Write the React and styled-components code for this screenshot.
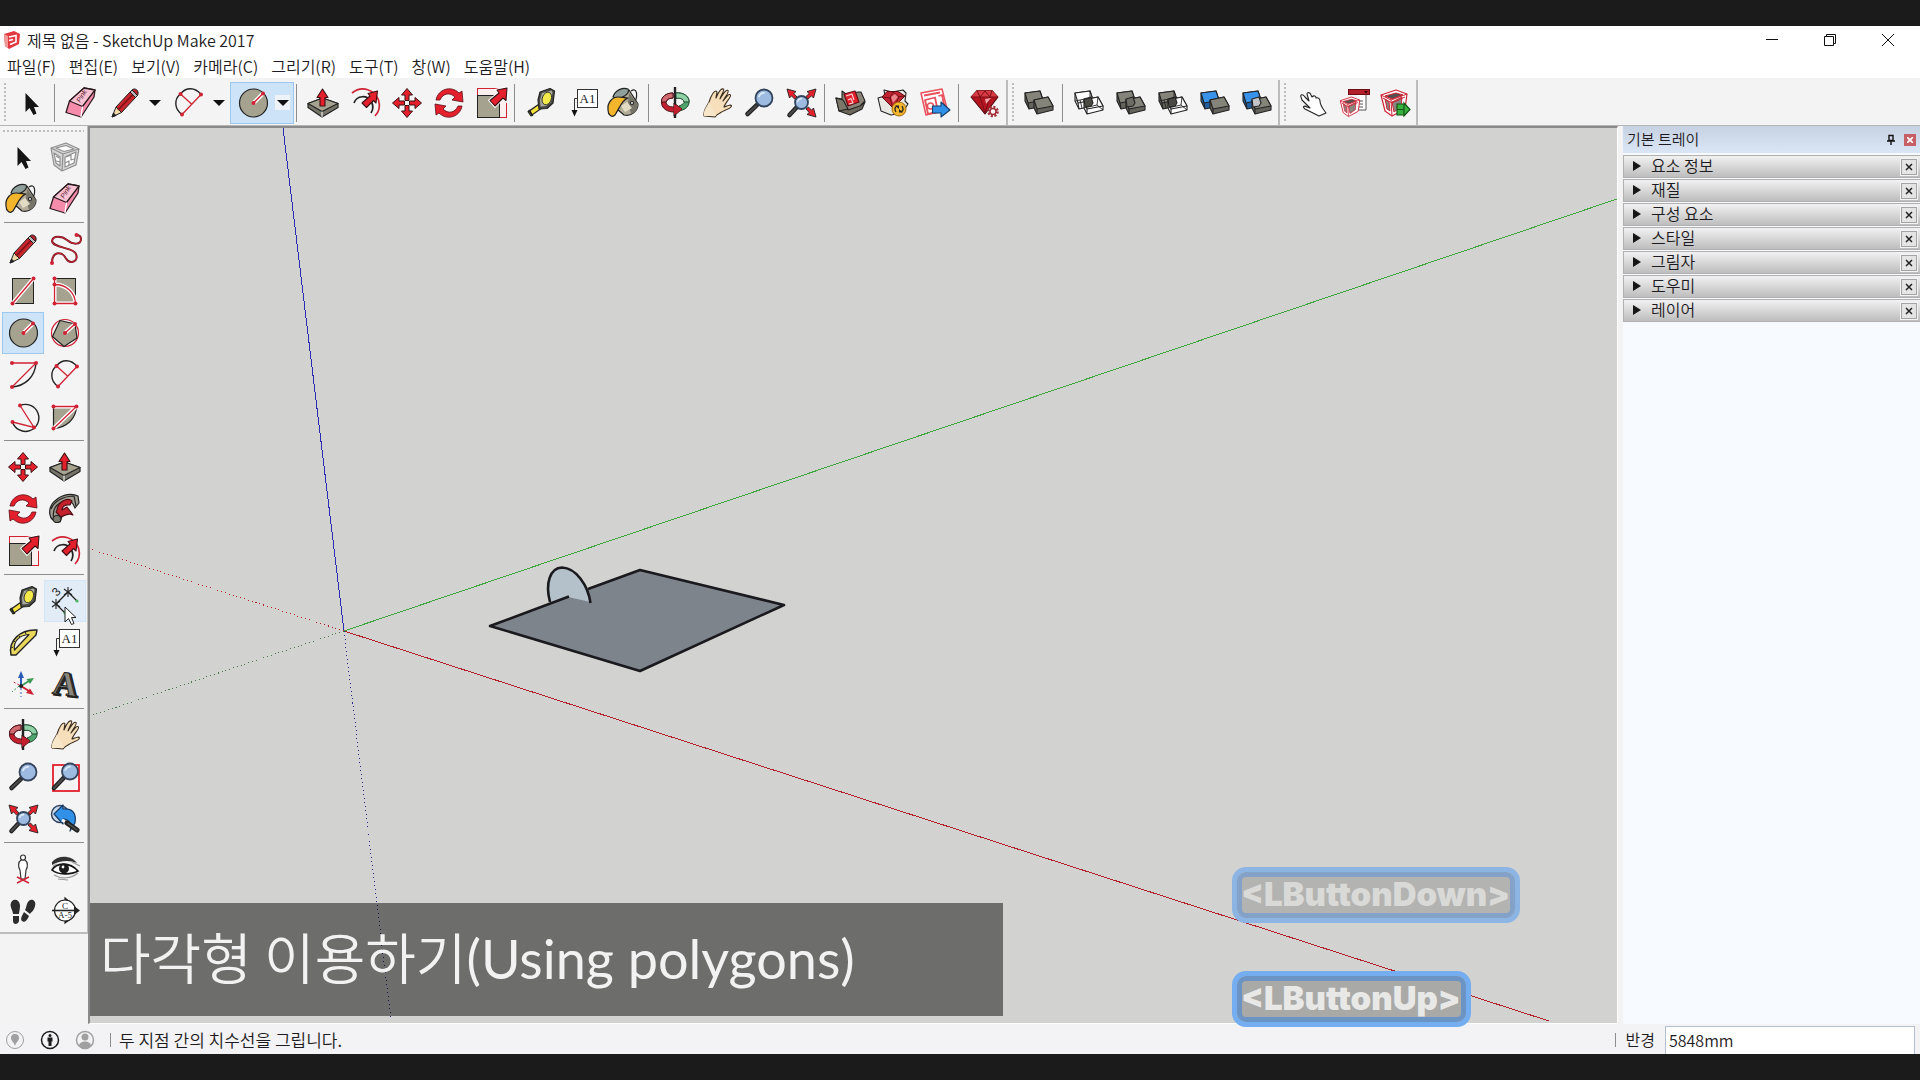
import { useState } from "react";
import styled, { createGlobalStyle, css } from "styled-components";

const RED = "#e3202c";
const LINE = "#cf2334";
const DARK = "#222222";
const STONE = "#a5a390";

const Dot = ({ x, y }) => <circle cx={x} cy={y} r="2" fill={LINE} />;

// red guide line with a white halo so it reads over the grey faces
const Guide = ({ d }) => (
    <g fill="none">
        <path d={d} stroke="#fff" strokeWidth="4" />
        <path d={d} stroke={LINE} strokeWidth="1.3" />
    </g>
);

const Lens = ({ x, y, r, hx, hy }) => (
    <g>
        <path d={`M${x - r * 0.7} ${y + r * 0.7}L${hx} ${hy}`} stroke="#222" strokeWidth="4.6" strokeLinecap="round" />
        <path d={`M${x - r * 0.9} ${y + r * 0.9}L${hx} ${hy}`} stroke="#4a4a4a" strokeWidth="2" strokeLinecap="round" />
        <circle cx={x} cy={y} r={r} fill="#9dbbe0" stroke="#33445c" strokeWidth="1.8" />
        <path d={`M${x - r * 0.6} ${y - r * 0.1}A${r * 0.6} ${r * 0.6} 0 0 1 ${x + r * 0.1} ${y - r * 0.6}`} fill="none" stroke="#dbe8f8" strokeWidth="1.8" />
    </g>
);

const CornerArrow = ({ x, y, turn }) => (
    <path transform={`translate(${x} ${y}) rotate(${turn})`} d="M0 0L9 2.5L6.8 4.5L10 8L7.5 10L4.5 6.8L2.5 9Z" fill={RED} stroke={DARK} strokeWidth="0.9" />
);

const Boxes = ({ back = "#85847a", front = "#85847a", backSide, frontSide, core, wire }) => (
    <g stroke={DARK} strokeWidth="1.1" strokeLinejoin="round">
        <path d="M7 11L22 9L25 18L25 24L11 27L7 19Z" fill={backSide || back} />
        <path d="M7 11L22 9L25 18L10 21Z" fill={back} />
        <path d="M10 21L11 27" fill="none" />
        <path d="M16 18L30 15L35 24L35 28L19 32L16 26Z" fill={frontSide || front} />
        <path d="M16 18L30 15L35 24L19 27Z" fill={front} />
        <path d="M19 27L19 32" fill="none" />
        {core && <path d="M16 17L23 15L25 21L23 24L17 25Z" fill={core} />}
        {wire && <path d="M12 18L14 26M16 26L29 23L35 28M29 23L30 15M7 19L22 16V9" fill="none" strokeWidth="0.9" />}
    </g>
);

const Crate = () => (
    <g strokeLinejoin="round" strokeWidth="1.1">
        <path d="M6 16L12 17L18 27L31 23L35 20L32 27L20 33L9 29Z" fill="#6d685c" stroke={DARK} />
        <path d="M12 9L16 12L28 10L31 10L35 19L30 24L18 28L12 20Z" fill="#8a8478" stroke={DARK} />
        <path d="M6 16L13 18L18 27L9 29Z" fill="#7c776b" stroke={DARK} />
        <path d="M14 12L25 9L29 20L18 24Z" fill={RED} stroke="#5e1017" />
        <path d="M16 14L22 12L24 18M18 18L21 16.500L23 21L19 22" fill="none" stroke="#f7dada" strokeWidth="1.1" />
    </g>
);

const Cage = () => (
    <g strokeLinejoin="round">
        <path d="M7 13L22 8L33 12L31 27L18 34L11 29Z" fill="#fff" stroke={LINE} strokeWidth="1.2" />
        <path d="M11 14L22 11L29 13L18 17Z" fill="#55504e" stroke={LINE} strokeWidth="1" />
        <path d="M18 20L28 15L27 25L20 30ZM11 17L15 20L16 29L13 27Z" fill="#8b8580" stroke={LINE} strokeWidth="1" />
        <path d="M7 13L17 18L33 12M17 18L18 34M9 16L18 21L31 15" fill="none" stroke={LINE} strokeWidth="1" />
    </g>
);

const BigArrow = ({ d }) => <path d={d} fill={RED} stroke="#3a1014" strokeWidth="1.1" strokeLinejoin="round" />;

const ICONS = {
    select: <path d="M15.500 11V30L19.500 26L23.500 33L26.500 31.500L24 25H29Z" fill="#151515" />,
    eraser: (
        <g stroke="#2b1a1f" strokeWidth="1.3" strokeLinejoin="round">
            <path d="M24 6L35 8L34 15L21 35L6 30.500L9.500 19Z" fill="#f58cab" />
            <path d="M24 6L35 8L22.500 24.500L9.500 19Z" fill="#fac3d3" />
            <path d="M22.500 24.500L21 35" fill="none" stroke="#fff" />
            <text transform="translate(20 21) rotate(-58)" fontSize="7" fontStyle="italic" fontFamily="Liberation Sans, sans-serif" fill="#5e1e33" stroke="none">Pink</text>
        </g>
    ),
    pencil: (
        <g stroke={DARK} strokeWidth="1" strokeLinejoin="round">
            <path d="M8 35L12 25L17.500 30.500Z" fill="#efd9a8" />
            <path d="M12 25L26 10L31.500 15.500L17.500 30.500Z" fill="#c9252c" />
            <path d="M14 28L28.500 13" stroke="#7c1116" strokeWidth="1.6" />
            <path d="M26 10L28 8L33.500 13.500L31.500 15.500Z" fill="#b9b9b9" />
            <path d="M28 8C31 5 36 9 33.500 13.500Z" fill="#b72230" />
            <path d="M8 35L9.500 31L12 33.500Z" fill={DARK} />
        </g>
    ),
    arc2: (
        <g fill="none">
            <path d="M12.500 12C18 5 27 5 33 12.500M12.500 12C6 17 6 27 14 32.500" stroke={DARK} strokeWidth="1.4" />
            <path d="M14 32.500L33 12.500M12.500 12L23.500 22" stroke={LINE} strokeWidth="1.3" />
            <Dot x={12.5} y={12} /><Dot x={33} y={12.5} /><Dot x={14} y={32.5} />
        </g>
    ),
    circle: (
        <g>
            <circle cx="21.500" cy="21" r="14" fill={STONE} stroke={DARK} strokeWidth="1.2" />
            <Guide d="M21.500 21L31 11.500" />
            <Dot x={21.5} y={21} /><Dot x={31} y={11.5} />
        </g>
    ),
    pushpull: (
        <g strokeLinejoin="round">
            <path d="M6 21.500L20.500 16L36 21.500V25.500L20 35L6 25.500Z" fill="#77756a" stroke={DARK} strokeWidth="1.2" />
            <path d="M6 21.500L20.500 16L36 21.500L20 29.500Z" fill={STONE} stroke={DARK} strokeWidth="1.2" />
            <path d="M20 29.500V35" stroke="#fff" strokeWidth="1" />
            <BigArrow d="M20.500 7L26 15.500H23V24H18V15.500H15Z" />
        </g>
    ),
    offset: (
        <g fill="none">
            <path d="M8 11C18 3 31 8 34.500 18C36.500 25 35 30 31 34" stroke={LINE} strokeWidth="1.7" />
            <path d="M10 21C13 13 23 13 27 19C30 24 29 28 27 31" stroke={DARK} strokeWidth="1.7" />
            <BigArrow d="M33.500 9L24 11.500L26 14L18 21L22.500 25.500L29.500 18.500L32 21Z" />
        </g>
    ),
    move: (
        <g>
            {[0, 90, 180, 270].map((turn) => (
                <path key={turn} transform={`rotate(${turn} 21 21)`} d="M21 6.500L26.500 13H23V18.500H19V13H15.500Z" fill={RED} stroke="#3a1014" strokeWidth="1" strokeLinejoin="round" />
            ))}
        </g>
    ),
    rotate: (
        <g fill={RED} stroke="#5b1016" strokeWidth="0.8" strokeLinejoin="round">
            <path d="M8 18C10 7 23 3 31 11L34 9L35 20L24 18L27 15C22 10 15 11 12 18Z" />
            <path d="M34 24C32 35 19 39 11 31L8 33L7 22L18 24L15 27C20 32 27 31 30 24Z" />
        </g>
    ),
    scale: (
        <g>
            <rect x="7.500" y="6.500" width="29" height="29" fill="#fbeff0" stroke={LINE} />
            <rect x="7.500" y="13.500" width="22" height="22" fill={STONE} stroke={DARK} />
            <path d="M37 6L27 8L29 11L20 18.500L25 24L33 16L36 18.500Z" fill="none" stroke="#fff" strokeWidth="3" />
            <BigArrow d="M37 6L27 8L29 11L20 18.500L25 24L33 16L36 18.500Z" />
        </g>
    ),
    tape: (
        <g strokeLinejoin="round">
            <path d="M22 23L9 32" stroke={DARK} strokeWidth="6" />
            <path d="M22 23L10 31.500" stroke="#f4e23c" strokeWidth="3.400" />
            <path d="M9 28L12.500 34" stroke={DARK} strokeWidth="2" />
            <path d="M20 10L30 6.500L34.500 9L33 21L27 26.500L19 27L18 18Z" fill="#4a4a45" stroke={DARK} strokeWidth="1.2" />
            <path d="M22 11L31.500 8.500L32.500 10L31 20L26 24L20.500 24.500L20 18Z" fill="#a9a9a1" />
            <ellipse cx="27" cy="16.500" rx="4.500" ry="6.500" transform="rotate(20 27 16)" fill="#f4e94a" stroke={DARK} strokeWidth="0.8" />
        </g>
    ),
    text: (
        <g>
            <rect x="15.500" y="7.500" width="20" height="18" fill="#fff" stroke="#333" />
            <path d="M15.500 16.500H12.500V28" fill="none" stroke="#333" />
            <path d="M9.500 28H15.500L12.500 34.500Z" fill="#111" />
            <text x="25.500" y="21" textAnchor="middle" fontSize="13" fontFamily="Liberation Serif, serif" fill="#222">A1</text>
        </g>
    ),
    paint: (
        <g stroke={DARK} strokeWidth="1.2" strokeLinejoin="round">
            <path d="M27 9C33 5 34 13 31 20" fill="none" />
            <path d="M12 14L25 8L34 22C34 29 27 35 20 33L13 27Z" fill="#b3ad9c" />
            <path d="M25 11L34 22C34 27 31 31 27 32L24 20Z" fill="#77746a" stroke="none" />
            <path d="M9 15C11 8 19 5 24 7C27 11 17 19 9 15Z" fill="#8fa09c" />
            <path d="M4 28C3 20 9 15 14 15C18 15 22 16 24 16C18 18 16 25 11 33C8 36 4 33 4 28Z" fill="#f3b52c" />
            <path d="M17 24L23 20L28 26L21 30Z" fill="#e3dcc4" stroke="none" />
            <circle cx="28" cy="21" r="1.500" fill="#fff" />
        </g>
    ),
    orbit: (
        <g strokeLinejoin="round">
            <path d="M22 11C30 10 36 15 35 21C34 26 30 28 25 29V24C28 23 31 21 30 19C28 16 25 16 22 16Z" fill="#4fa36c" stroke="#1d4a2d" strokeWidth="1" />
            <path d="M21.500 11C30 10 35.500 15 35 20H30C29 16 25 16 22 16.500Z" fill="#8fd0a6" stroke="#1d4a2d" strokeWidth="1" />
            <path d="M19 11C12 11 7 15 7.500 21C8 27 14 30 20 30V34L28 27L20 21V25C15 25 12 23 12 20C13 17 16 16 19 16Z" fill="#c3202f" stroke="#4a1016" strokeWidth="1" />
            <path d="M19 11C12 11 7 15 7.500 20H12C13 17 16 16 19 16Z" fill="#cf6a70" stroke="#4a1016" strokeWidth="1" />
            <path d="M21 5V36" stroke="#222" strokeWidth="2.400" />
            <path d="M20 22L28 27L20 33Z" fill="#c3202f" />
        </g>
    ),
    pan: (
        <g>
            <path d="M8 34C7 28 11 25 13 20C15 14 17 9 20 9C22 9 20 13 20 16C22 11 25 6 27.500 7C29 8 25 13 24 17C27 12 30 7 32 8.500C33.500 10 29 15 27 19C30 15 33 11 34.500 13C35.500 15 29 21 28 25C31 24 35 22 35.500 24C35 27 28 28 24 31C20 33 20 34 19 35Z" fill="#f6dfba" stroke="#3b2e1e" strokeWidth="1.1" strokeLinejoin="round" />
            <path d="M8 34C7 28 11 25 13 20L20 34Z" fill="#f8e6cb" />
        </g>
    ),
    zoom: <Lens x={26} y={16} r={8.5} hx={9.5} hy={32} />,
    extents: (
        <g>
            <Lens x={21.5} y={20.5} r={6.5} hx={9.5} hy={33} />
            <CornerArrow x={7} y={7} turn={0} />
            <CornerArrow x={36} y={7} turn={90} />
            <CornerArrow x={36} y={35} turn={180} />
        </g>
    ),
    warehouse: <Crate />,
    extension: (
        <g strokeLinejoin="round">
            <path d="M6 16L13 14L12 8L20 10L31 8L34 11L33 19L36 22L30 31L19 33L9 29Z" fill="#e9e7e2" stroke={DARK} strokeWidth="1.1" />
            <path d="M10 15L15 9.500H26L33 14L21 26Z" fill="#c32431" stroke="#5d0c14" strokeWidth="1" />
            <path d="M10 15L18 16L33 14M18 16L21 10L27 15L21 26L18 16" fill="none" stroke="#5d0c14" strokeWidth="0.8" />
            <path d="M19 15L23 12L26 15L21 21Z" fill="#ee858c" />
            <circle cx="27" cy="27" r="7" fill="#f5b72d" stroke="#a36a0a" strokeWidth="1" />
            <path d="M24 30C22 27 23 25 25 24M30 24C32 27 31 29 29 30" fill="none" stroke={DARK} strokeWidth="1.300" />
            <path d="M23 23.500H27V27ZM31 30.500H27V27Z" fill={DARK} />
        </g>
    ),
    layout: (
        <g strokeLinejoin="round">
            <path d="M7 11L28 7L33 27L12 33Z" fill="#fff" stroke="#e8505a" strokeWidth="1.5" />
            <path d="M10 13.500L26 10.500M11 18L21 15.500L24 30L14 32ZM24.500 14L28 13L31 27" fill="none" stroke="#e8505a" strokeWidth="1.800" />
            <circle cx="16.500" cy="24" r="3" fill="none" stroke="#e8505a" strokeWidth="1.400" />
            <path d="M18.500 24H27V20L36 28L27 35V31H18.500Z" fill="#3191e8" stroke="#173c66" strokeWidth="1.100" />
        </g>
    ),
    ruby: (
        <g strokeLinejoin="round">
            <path d="M7 15L13 8.500H28L34 15L21 32Z" fill="#b4141f" stroke="#4d0a10" strokeWidth="1.1" />
            <path d="M13 8.500H28L34 15H7Z" fill="#d83a43" />
            <path d="M7 15H34M13 8.500L16 15L21 31L26 15L28 8.500M16 15L21 9L26 15" fill="none" stroke="#7a0f18" strokeWidth="1" />
            <path d="M21 17L27 16L22 22Z" fill="#f7a7ab" />
            <circle cx="29" cy="29.500" r="4.500" fill="#f4f4f4" stroke="#a12f38" strokeWidth="2.600" strokeDasharray="2 1.500" />
            <circle cx="29" cy="29.500" r="3" fill="#fff" stroke="#a12f38" strokeWidth="1.600" />
        </g>
    ),
    shell: <Boxes backSide="#65645c" frontSide="#65645c" />,
    intersect: <Boxes back="#ffffff" front="#ffffff" core="#4b4a44" wire />,
    union: <Boxes backSide="#65645c" frontSide="#65645c" core="#6e6d65" />,
    subtract: <Boxes backSide="#65645c" front="#ffffff" core="#4b4a44" wire />,
    trim: <Boxes back="#3a93ea" backSide="#225f9f" frontSide="#65645c" />,
    split: <Boxes back="#3a93ea" backSide="#225f9f" frontSide="#65645c" core="#c4c3c8" />,
    pointer: <path d="M11 15C10 12 13 12 15 15L19 19L17 12C17 10 20 10 21 13L22 15C24 13 26 14 26 16C28 15 30 17 30 19C30 24 34 28 36 31L29 34L25 32L15 27C12 25 14 23 17 25L20 26L12 18Z" fill="#fff" stroke={DARK} strokeWidth="1.1" strokeLinejoin="round" />,
    options: (
        <g>
            <path d="M26 12H34V28H22" fill="#fff" stroke="#555" />
            <path d="M25 19H31M25 22H31M25 25H31" stroke="#555" />
            <g transform="translate(3 9) scale(.75)"><Cage /></g>
            <rect x="16.500" y="7.500" width="21" height="5" fill="#b3202a" stroke="#6d0d15" />
            <path d="M32 9H36L34 11.500Z" fill="#33060a" />
        </g>
    ),
    attributes: (
        <g>
            <Cage />
            <path d="M23 22H30V33H23ZM30 21L36 27.500L30 34Z" fill="#39b13e" stroke="#145317" strokeWidth="1.200" />
            <path d="M23 27.500H30" stroke="#145317" />
        </g>
    ),
    component: (
        <g fill="none" stroke="#8f8f8f" strokeWidth="1.2" strokeLinejoin="round">
            <path d="M7 12L22 7L35 13L32 29L18 35L10 29Z" fill="#d6d6d6" />
            <path d="M7 12L19 18L35 13M19 18L18 35" />
            <path d="M12 12L22 9.500L30 13L20 15.500ZM21 21L32 16L30 27L21 31ZM10 17L16 21V30L12 27Z" fill="#fff" />
            <path d="M22 21L27 19V24L30 23M21 27L25 25V29M12 20L15 22M12 25L16 26" />
        </g>
    ),
    freehand: (
        <g fill="none">
            <path d="M8 35C8 26 13 24 18 26C23 29 22 35 28 34C34 33 34 26 29 23C22 19 9 19 8 13C9 7 18 8 23 12C29 17 37 17 37 11C37 8 35 7 32 7" stroke="#6f1620" strokeWidth="2" />
            <path d="M8 35C8 26 13 24 18 26C23 29 22 35 28 34C34 33 34 26 29 23C22 19 9 19 8 13C9 7 18 8 23 12C29 17 37 17 37 11C37 8 35 7 32 7" stroke={LINE} strokeWidth="1" />
            <Dot x={8} y={35} /><Dot x={32.5} y={7} />
        </g>
    ),
    rectangle: (
        <g>
            <rect x="10.500" y="8.500" width="21" height="25" fill={STONE} stroke={DARK} />
            <Guide d="M10.500 33.500L31.500 8.500" />
            <Dot x={10.5} y={33.5} /><Dot x={31.5} y={8.5} />
        </g>
    ),
    rotatedRect: (
        <g>
            <rect x="10.500" y="8.500" width="21" height="25" fill={STONE} stroke={DARK} />
            <Guide d="M10.500 8.500V33.500H31.500C31 22 22 14.500 10.500 14.500" />
            <Dot x={10.5} y={8.5} /><Dot x={10.5} y={14.5} /><Dot x={10.5} y={33.5} /><Dot x={31.5} y={33.5} />
        </g>
    ),
    polygon: (
        <g>
            <circle cx="21" cy="21" r="13.500" fill="none" stroke={LINE} strokeWidth="1.200" />
            <path d="M16 8.500L31 12L33 26L20 34.500L8.500 24.500Z" fill={STONE} stroke={DARK} strokeWidth="1.200" />
            <Guide d="M21 21L31 12" />
            <Dot x={21} y={21} /><Dot x={31} y={12} />
        </g>
    ),
    arc: (
        <g fill="none">
            <path d="M34 9C33 23 23 32 10 33" stroke={DARK} strokeWidth="1.4" />
            <path d="M10 9H34L10 33" stroke={LINE} strokeWidth="1.3" />
            <Dot x={10} y={9} /><Dot x={34} y={9} /><Dot x={10} y={33} />
        </g>
    ),
    arc3: (
        <g fill="none">
            <path d="M18 9.500A13.500 13.500 0 1 1 10.500 26" stroke={DARK} strokeWidth="1.4" />
            <path d="M18 9.500L32 31.500L10.500 26" stroke={LINE} strokeWidth="1.3" />
            <Dot x={18} y={9.5} /><Dot x={32} y={31.5} /><Dot x={10.5} y={26} />
        </g>
    ),
    pie: (
        <g>
            <path d="M9.500 10.500H32.500C32 23 22 32 9.500 32.500Z" fill={STONE} stroke={DARK} strokeWidth="1.200" />
            <Guide d="M9.500 10.500H32.500L9.500 32.500" />
            <Dot x={9.5} y={10.5} /><Dot x={32.5} y={10.5} /><Dot x={9.5} y={32.5} />
        </g>
    ),
    followme: (
        <g strokeLinejoin="round" strokeWidth="1.2">
            <path d="M16 34C3 34 3 19 12 12C19 6 28 5 34 8L35 15L31 20C29 15 27 12 22 14C15 17 13 24 18 28Z" fill="#a09e92" stroke={DARK} />
            <path d="M7 21C10 13 20 8 30 8M10 31C7 20 15 13 24 12M30 8L32 18" fill="none" stroke={DARK} />
            <path d="M13 22C14 14 23 9 28 13L26 17C21 16 18 19 18 22L23 19L29 27C24 24 20 28 17 29L12 24Z" fill="#c3202c" stroke="#4f0d13" />
            <ellipse cx="13" cy="31" rx="4" ry="3.500" fill="#7d7b70" stroke={DARK} />
        </g>
    ),
    dimension: (
        <g fill="none" stroke={DARK} strokeWidth="1.300">
            <path d="M12 24L24 12L33 21M12 24L21 33" />
            <path d="M20 9L28 15M24 7V17M20 15L28 9M8 21L16 27M12 19V29M8 27L16 21" strokeWidth="1.100" />
            <circle cx="33" cy="21" r="1.600" fill="#4db85d" stroke="none" />
            <circle cx="21" cy="33" r="1.600" fill="#4db85d" stroke="none" />
            <text transform="translate(13 17) rotate(-48)" fontSize="12" fontFamily="Liberation Sans, sans-serif" fill={DARK} stroke="none">3</text>
        </g>
    ),
    protractor: (
        <g strokeLinejoin="round">
            <path d="M9 33C6 19 18 7 35 8L34 13L14 33Z" fill="#e9d75c" stroke={DARK} strokeWidth="1.400" />
            <path d="M12.500 28C11 20 17 13 27 12.500Z" fill="#f5f4f4" stroke={DARK} strokeWidth="1.200" />
            <path d="M9 25L11 25.500M11 18L13 20M16 13L18 15M23 9L24 12" stroke={DARK} />
        </g>
    ),
    axes: (
        <g fill="none">
            <path d="M19 22V14" stroke="#2a5bb5" strokeWidth="2" />
            <path d="M19 7L22 14H16Z" fill="#2a5bb5" />
            <path d="M19 22L27 17" stroke="#3d9a52" strokeWidth="2" />
            <path d="M32 14L28 20L24.500 15Z" fill="#3d9a52" />
            <path d="M19 22L27 27" stroke={LINE} strokeWidth="2" />
            <path d="M32 31L24 29L28 24.500Z" fill={LINE} />
            <path d="M19 24V33" stroke="#2a5bb5" strokeDasharray="2 2" />
            <path d="M17 22L10 28" stroke="#3d9a52" strokeDasharray="2 2" />
            <path d="M17 21L10 17" stroke={LINE} strokeDasharray="2 2" />
            <circle cx="19" cy="22" r="2" fill={DARK} />
        </g>
    ),
    text3d: (
        <g fontFamily="Liberation Serif, serif" fontWeight="700" fontSize="34" textAnchor="middle" transform="translate(20 30) rotate(7)">
            <text x="2" y="2" fill="#3a3a36" stroke={DARK} strokeWidth="1.500">A</text>
            <text x="0" y="1" fill="#8a887e" stroke={DARK} strokeWidth="1">A</text>
        </g>
    ),
    zoomWindow: (
        <g>
            <rect x="9" y="9" width="26" height="26" fill="none" stroke={RED} strokeWidth="1.800" />
            <Lens x={26} y={15.5} r={8} hx={10} hy={32} />
        </g>
    ),
    previous: (
        <g strokeLinejoin="round">
            <circle cx="16" cy="16" r="8.500" fill="#c9daee" stroke="#33445c" strokeWidth="1.500" />
            <path d="M10 16L19 7V11C27 10 33 14 31 25L26 33C28 27 26 21 19 21V26Z" fill="#3191e8" stroke="#173c66" strokeWidth="1.200" />
            <path d="M18 22L23 25" stroke="#fff" strokeWidth="3" />
            <path d="M23 25L33 32" stroke="#222" strokeWidth="5" strokeLinecap="round" />
            <path d="M24 25.500L33 32" stroke="#555" strokeWidth="1.500" strokeLinecap="round" />
        </g>
    ),
    camera: (
        <g fill="#fff" stroke="#333" strokeWidth="1.200">
            <path d="M19 12C16 14 16 19 18 22L19 31H23L24 22C26 19 26 14 23 12Z" />
            <circle cx="21" cy="9.500" r="2.500" />
            <path d="M15 29L27 35M27 29L15 35" stroke={LINE} strokeWidth="1.400" />
        </g>
    ),
    look: (
        <g>
            <path d="M8 14C14 7 27 7 33 15C26 12 16 12 8 17Z" fill="#333" />
            <path d="M8 22C12 15 25 13 34 23C27 27 14 27 8 22Z" fill="#fff" stroke="#111" strokeWidth="1.600" />
            <circle cx="20" cy="20.500" r="5" fill="#1b1b1b" />
            <circle cx="19" cy="19" r="1.400" fill="#fff" />
            <path d="M10 27C17 31 27 31 34 25M14 31L24 32M28 14L36 18M9 18L13 16" fill="none" stroke="#9a9a9a" strokeWidth="1.200" />
        </g>
    ),
    walk: (
        <g fill="#2c2c2c">
            <path d="M8.500 15C9 8 17 8 18 15C18 20 17 22 17 24L11 24C11 21 9 19 8.500 15Z" />
            <path d="M11 26L17 26L17 31C16 35 11 35 11 31Z" />
            <path d="M25 14C27 7 35 9 33 16C32 21 29 22 28 24L23 20C24 18 24 17 25 14Z" />
            <path d="M22 22L27 26C25 31 22 33 20 31C18 29 20 26 22 22Z" />
        </g>
    ),
    section: (
        <g fill="none" stroke={DARK} strokeWidth="1.200">
            <path d="M21 8L28 14L21 14ZM21 33L28 28H21Z" fill={DARK} />
            <circle cx="21" cy="20.500" r="10.500" fill="#fff" />
            <path d="M8 20.500H33" strokeWidth="1.600" />
            <path d="M30 16L36 20.500L30 25Z" fill={DARK} stroke="none" />
            <g fontFamily="Liberation Serif, serif" fontSize="9" fill={DARK} stroke="none" textAnchor="middle">
                <text x="21" y="19">C</text>
                <text x="21" y="28">A-5</text>
            </g>
        </g>
    ),
};

const topBars = [
    {
        name: "시작",
        tools: [
            ["select", "선택"], null,
            ["eraser", "지우개"], ["pencil", "선", true], ["arc2", "2점 호", true], ["circle", "원", true], null,
            ["pushpull", "밀기/끌기"], ["offset", "오프셋"], ["move", "이동"], ["rotate", "회전"], ["scale", "배율"], null,
            ["tape", "줄자"], ["text", "텍스트"], ["paint", "페인트통"], null,
            ["orbit", "궤도"], ["pan", "이동 보기"], ["zoom", "확대/축소"], ["extents", "범위 확대"], null,
            ["warehouse", "3D Warehouse"], ["extension", "Extension Warehouse"], ["layout", "LayOut으로 보내기"], null,
            ["ruby", "확장 관리자"],
        ],
    },
    {
        name: "솔리드 도구",
        tools: [["shell", "외피"], null, ["intersect", "교차"], ["union", "결합"], ["subtract", "빼기"], ["trim", "자르기"], ["split", "분할"]],
    },
    {
        name: "동적 구성요소",
        tools: [["pointer", "상호 작용"], ["options", "구성요소 옵션"], ["attributes", "구성요소 속성"]],
    },
];

const paletteGroups = [
    [["select", "선택"], ["component", "구성요소 만들기"], ["paint", "페인트통"], ["eraser", "지우개"]],
    [["pencil", "선"], ["freehand", "자유형"], ["rectangle", "직사각형"], ["rotatedRect", "회전된 직사각형"], ["circle", "원"], ["polygon", "다각형"], ["arc", "호"], ["arc2", "2점 호"], ["arc3", "3점 호"], ["pie", "파이"]],
    [["move", "이동"], ["pushpull", "밀기/끌기"], ["rotate", "회전"], ["followme", "따라가기"], ["scale", "배율"], ["offset", "오프셋"]],
    [["tape", "줄자"], ["dimension", "치수"], ["protractor", "각도기"], ["text", "텍스트"], ["axes", "축"], ["text3d", "3D 텍스트"]],
    [["orbit", "궤도"], ["pan", "이동 보기"], ["zoom", "확대/축소"], ["zoomWindow", "창 확대/축소"], ["extents", "범위 확대"], ["previous", "이전"]],
    [["camera", "카메라 배치"], ["look", "둘러보기"], ["walk", "걷기"], ["section", "단면"]],
];

const menus = ["파일(F)", "편집(E)", "보기(V)", "카메라(C)", "그리기(R)", "도구(T)", "창(W)", "도움말(H)"];
const trays = ["요소 정보", "재질", "구성 요소", "스타일", "그림자", "도우미", "레이어"];

function Icon({ name }) {
    return <IconSvg viewBox="0 0 42 42" aria-hidden="true">{ICONS[name]}</IconSvg>;
}

function Scene() {
    return (
        <SceneSvg viewBox="90 128 1527 895" preserveAspectRatio="xMinYMin slice" role="img" aria-label="모델">
            <g fill="none" strokeWidth="1" shapeRendering="crispEdges">
                <path d="M344 631L283 128" stroke="#2b2bb4" />
                <path d="M344 631L1617 199" stroke="#3da63d" />
                <path d="M344 631L1549 1021" stroke="#b3202c" />
                <g strokeDasharray="1 3">
                    <path d="M344 631L391 1020" stroke="#2b2b8c" />
                    <path d="M344 631L90 716" stroke="#4b7a4b" />
                    <path d="M344 631L90 549" stroke="#b3202c" />
                </g>
            </g>
            <path d="M490 626L640 570L784 605L640 671Z" fill="#7d848b" />
            <path d="M550 602C545 583 550 568 562 567.500C576 568 588 585 590.500 602L568 597Z" fill="#b4c0ca" />
            <g fill="none" stroke="#1a191d" strokeWidth="2.600" strokeLinejoin="round">
                <path d="M569 596.500L490 626L640 671L784 605L640 570L588 589" />
                <path d="M550 602C545 583 550 568 562 567.500C576 568 588 585 590.500 603" />
            </g>
        </SceneSvg>
    );
}

export default function App() {
    const [tool, setTool] = useState("circle");
    const [radius, setRadius] = useState("5848mm");

    return (
        <Screen>
            <GlobalStyle />
            <Window>
                <TitleBar>
                    <Logo viewBox="0 0 18 20" aria-hidden="true">
                        <path d="M1 4L11 1L17 4L16 14L6 19L2 16Z" fill="#e2383f" />
                        <path d="M6 7L13 5.500V12L7 14.500M6 10.500L10 9.500" fill="none" stroke="#fff" strokeWidth="1.600" />
                        <path d="M1 4L5 6V18L2 16Z" fill="#f29a9a" />
                    </Logo>
                    <Title>제목 없음 - SketchUp Make 2017</Title>
                    <WindowButton aria-label="최소화"><svg width="14" height="14"><path d="M1 6.500H13" stroke="#111" /></svg></WindowButton>
                    <WindowButton aria-label="이전 크기로"><svg width="14" height="14"><path d="M1.500 3.500H10.500V12.500H1.500ZM3.500 3.500V1.500H12.500V10.500H10.500" fill="none" stroke="#111" /></svg></WindowButton>
                    <WindowButton aria-label="닫기"><svg width="14" height="14"><path d="M1 1L13 13M13 1L1 13" stroke="#111" /></svg></WindowButton>
                </TitleBar>

                <MenuBar>
                    {menus.map((menu) => <MenuItem key={menu}>{menu}</MenuItem>)}
                </MenuBar>

                <ToolbarRow>
                    {topBars.map((bar) => (
                        <Toolbar key={bar.name} role="toolbar" aria-label={bar.name}>
                            <Grip />
                            {bar.tools.map((item, i) => {
                                if (!item) return <Divider key={i} />;
                                const [id, label, menu] = item;
                                if (!menu) {
                                    return <ToolButton key={id} aria-label={label} onClick={() => setTool(id)}><Icon name={id} /></ToolButton>;
                                }
                                return (
                                    <SplitTool key={id} $active={tool === id}>
                                        <ToolButton aria-label={label} onClick={() => setTool(id)}><Icon name={id} /></ToolButton>
                                        <CaretButton aria-label={`${label} 더보기`} />
                                    </SplitTool>
                                );
                            })}
                        </Toolbar>
                    ))}
                </ToolbarRow>

                <Workspace>
                    <Palette role="toolbar" aria-label="큰 도구 세트">
                        <TopGrip />
                        {paletteGroups.map((group, i) => (
                            <PaletteGroup key={i}>
                                {group.map(([id, label]) => (
                                    <ToolButton key={id} aria-label={label} $active={tool === id} $hover={id === "dimension"} onClick={() => setTool(id)}>
                                        <Icon name={id} />
                                        {id === "dimension" && (
                                            <Cursor viewBox="0 0 13 20" aria-hidden="true">
                                                <path d="M1 1V16L4.500 12.500L7.500 18.500L10 17.500L7.500 11.500H12Z" fill="#fff" stroke="#222" />
                                            </Cursor>
                                        )}
                                    </ToolButton>
                                ))}
                            </PaletteGroup>
                        ))}
                    </Palette>

                    <Viewport>
                        <Scene />
                        <Caption>다각형 이용하기<span>(Using polygons)</span></Caption>
                        <KeyStack>
                            <KeyBadge $faded>&lt;LButtonDown&gt;</KeyBadge>
                            <KeyBadge>&lt;LButtonUp&gt;</KeyBadge>
                        </KeyStack>
                    </Viewport>

                    <Tray>
                        <TrayHeader>
                            <TrayTitle>기본 트레이</TrayTitle>
                            <PinButton aria-label="고정"><svg width="10" height="12"><path d="M3 1.500H7V6.500H3ZM1 7H9M5 7V11" fill="none" stroke="#111" strokeWidth="1.400" /></svg></PinButton>
                            <CloseTray aria-label="트레이 닫기">
                                <svg width="6" height="6"><path d="M0 0L6 6M6 0L0 6" stroke="#fff" strokeWidth="1.600" /></svg>
                            </CloseTray>
                        </TrayHeader>
                        {trays.map((name) => (
                            <TrayRow key={name}>
                                <Expand><i />{name}</Expand>
                                <CloseRow aria-label={`${name} 닫기`}>
                                    <svg width="8" height="8"><path d="M1 1L7 7M7 1L1 7" stroke="#222" strokeWidth="1.500" /></svg>
                                </CloseRow>
                            </TrayRow>
                        ))}
                    </Tray>
                </Workspace>

                <StatusBar>
                    <StatusIcon aria-label="위치" $color="#a0a0a0">
                        <svg viewBox="0 0 20 20"><circle cx="10" cy="10" r="8.500" fill="none" stroke="currentColor" /><path d="M10 16C9 12 6 11 6 8A4 4 0 0 1 14 8C14 11 11 12 10 16Z" fill="currentColor" /></svg>
                    </StatusIcon>
                    <StatusIcon aria-label="작성자" $color="#1c1c1c">
                        <svg viewBox="0 0 20 20"><circle cx="10" cy="10" r="8.500" fill="none" stroke="currentColor" strokeWidth="1.500" /><circle cx="10" cy="5.500" r="1.500" fill="currentColor" /><path d="M7.500 7.500H12.500V11.500H11.500V16H8.500V11.500H7.500Z" fill="currentColor" /></svg>
                    </StatusIcon>
                    <StatusIcon aria-label="로그인" $color="#a0a0a0">
                        <svg viewBox="0 0 20 20"><circle cx="10" cy="10" r="8.500" fill="none" stroke="currentColor" strokeWidth="1.500" /><circle cx="10" cy="7" r="3.500" fill="currentColor" /><path d="M4 16C4 10 16 10 16 16C13 19 7 19 4 16Z" fill="currentColor" /></svg>
                    </StatusIcon>
                    <StatusLine />
                    <Hint>두 지점 간의 치수선을 그립니다.</Hint>
                    <StatusLine />
                    <label htmlFor="radius">반경</label>
                    <Measure id="radius" value={radius} onChange={(e) => setRadius(e.target.value)} />
                </StatusBar>
            </Window>
        </Screen>
    );
}

const GlobalStyle = createGlobalStyle`
    * {
        box-sizing: border-box;
    }
    body {
        margin: 0;
        background: #1b1b1b;
        color: #1d1b22;
        font-family: "Noto Sans CJK KR", sans-serif;
        font-size: 16px;
        font-weight: 350;
    }
    button, input {
        font: inherit;
        color: inherit;
    }
    button {
        padding: 0;
        border: 0;
        background: none;
    }
`;

const Screen = styled.div`
    height: 100vh;
    padding: 26px 0;
    background: #1b1b1b;
`;

const Window = styled.div`
    height: 100%;
    display: flex;
    flex-direction: column;
    overflow: hidden;
    background: #f3f3f3;
`;

const TitleBar = styled.header`
    flex: none;
    height: 28px;
    display: flex;
    align-items: center;
    padding: 0 3px;
    background: #fff;
`;

const Logo = styled.svg`
    width: 18px;
    height: 20px;
    margin-right: 6px;
`;

const Title = styled.h1`
    flex: 1;
    margin: 0;
    font-size: 16px;
    font-weight: inherit;
    line-height: 26px;
`;

const WindowButton = styled.button`
    width: 58px;
    height: 28px;
    display: flex;
    align-items: center;
    justify-content: center;
`;

const MenuBar = styled.nav`
    flex: none;
    height: 24px;
    display: flex;
    padding-left: 1px;
    background: #fff;
`;

const MenuItem = styled.button`
    padding: 0 7px 0 6px;
    line-height: 24px;
`;

const ToolbarRow = styled.div`
    flex: none;
    height: 48px;
    display: flex;
    padding-top: 2px;
    border-bottom: 1px solid #b4b4b4;
`;

const Toolbar = styled.div`
    display: flex;
    align-items: center;
    border-right: 2px solid #bcbcbc;
    background: #f5f4f5;
`;

const Grip = styled.div`
    width: 2px;
    height: 40px;
    margin: 0 4px;
    background: repeating-linear-gradient(#bdbdbd 0 2px, transparent 2px 4px);
`;

const TopGrip = styled.div`
    height: 2px;
    margin: 4px 3px;
    background: repeating-linear-gradient(90deg, #bdbdbd 0 2px, transparent 2px 4px);
`;

const Divider = styled.div`
    width: 1px;
    height: 38px;
    margin: 0 5px 0 2px;
    background: #8d8d8d;
`;

const activeTool = css`
    background: #cce3f8;
    box-shadow: inset 0 0 0 1px #9cc7ee;
`;

const ToolButton = styled.button`
    position: relative;
    width: 42px;
    height: 42px;
    ${(p) => p.$hover && "background: #e1ecf7; box-shadow: inset 0 0 0 1px #d3e5f7;"}
    ${(p) => p.$active && activeTool}
`;

const SplitTool = styled.div`
    width: 64px;
    height: 42px;
    display: flex;
    align-items: center;
    padding-left: 2px;
    ${(p) => p.$active && activeTool}
    ${(p) => p.$active && "button + button { background: #eef3f8; }"}
`;

const CaretButton = styled.button`
    width: 15px;
    height: 15px;
    margin-left: 1px;
    display: flex;
    align-items: center;
    justify-content: center;
    &::before {
        content: "";
        border: 6px solid transparent;
        border-top-color: #111;
        border-bottom: 0;
    }
`;

const IconSvg = styled.svg`
    display: block;
    width: 42px;
    height: 42px;
`;

const Workspace = styled.main`
    flex: 1;
    min-height: 0;
    display: flex;
`;

const Palette = styled.div`
    align-self: flex-start;
    flex: none;
    width: 88px;
    border: solid #bcbcbc;
    border-width: 0 1px 2px 0;
    background: #f5f4f5;
`;

const PaletteGroup = styled.div`
    display: grid;
    grid-template-columns: 42px 42px;
    padding: 6px 0 2px 2px;
    & + & {
        position: relative;
    }
    & + &::before {
        content: "";
        position: absolute;
        top: 0;
        left: 4px;
        right: 3px;
        height: 1px;
        background: #8d8d8d;
    }
    &:nth-child(2) {
        padding-top: 0;
    }
    &:last-child {
        padding-bottom: 0;
    }
`;

const Cursor = styled.svg`
    position: absolute;
    left: 20px;
    top: 26px;
    width: 13px;
    height: 20px;
    z-index: 1;
`;

const Viewport = styled.section`
    position: relative;
    flex: 1;
    min-width: 0;
    border: solid;
    border-width: 2px 1px 1px 2px;
    border-color: #8a8a8a #fff #fff #8a8a8a;
    background: #d2d2d0;
`;

const SceneSvg = styled.svg`
    display: block;
    width: 100%;
    height: 100%;
`;

const Caption = styled.div`
    position: absolute;
    left: 0;
    bottom: 7px;
    width: 913px;
    height: 113px;
    padding-left: 10px;
    background: rgba(0, 0, 0, 0.48);
    color: #f2f2f2;
    font-family: "Noto Sans CJK KR", sans-serif;
    font-size: 55px;
    font-weight: 350;
    line-height: 104px;
    white-space: nowrap;
    span {
        font-family: Lato, sans-serif;
        font-size: 54px;
        font-weight: 400;
    }
`;

const KeyStack = styled.div`
    position: absolute;
    right: 96px;
    bottom: -4px;
    width: 289px;
    display: flex;
    flex-direction: column;
    align-items: flex-start;
    gap: 48px;
    z-index: 1;
`;

const KeyBadge = styled.kbd`
    height: 56px;
    padding: 0 5px 0 4px;
    border: 5px solid ${(p) => (p.$faded ? "#8db5e3" : "#74aef0")};
    border-radius: 14px;
    box-shadow: inset 0 0 0 5px ${(p) => (p.$faded ? "#84a2c8" : "#6b93c4")};
    background: ${(p) => (p.$faded ? "#b3b3b1" : "#a9a9a8")};
    color: ${(p) => (p.$faded ? "#d9d9d8" : "#e8e8e7")};
    font-family: Inter, "Open Sans", sans-serif;
    font-size: 33px;
    font-weight: 900;
    line-height: 44px;
`;

const Tray = styled.aside`
    flex: none;
    width: 297px;
    margin-left: 5px;
    background: #f7faff;
`;

const TrayHeader = styled.div`
    height: 27px;
    display: flex;
    align-items: center;
    padding: 0 4px;
    margin-bottom: 2px;
    background: linear-gradient(#c6d2e1, #dae6f5);
`;

const TrayTitle = styled.h2`
    flex: 1;
    margin: 0;
    padding-bottom: 2px;
    font-size: 15px;
    font-weight: inherit;
    line-height: 24px;
`;

const PinButton = styled.button`
    width: 10px;
    height: 12px;
    margin-right: 8px;
    svg {
        display: block;
    }
`;

const CloseTray = styled.button`
    width: 12px;
    height: 12px;
    display: flex;
    align-items: center;
    justify-content: center;
    background: #c75f66;
`;

const TrayRow = styled.div`
    height: 23px;
    margin-bottom: 1px;
    display: flex;
    align-items: center;
    padding-right: 3px;
    border: solid #b0b0b0;
    border-width: 1px 0 1px 1px;
    background: linear-gradient(#f2f2f2, #bdbdbd);
`;

const Expand = styled.button`
    flex: 1;
    display: flex;
    align-items: center;
    padding-bottom: 3px;
    line-height: 18px;
    text-align: left;
    i {
        margin: 2px 10px 0 9px;
        border: 5px solid transparent;
        border-left: 8px solid #151515;
        border-right: 0;
    }
`;

const CloseRow = styled.button`
    width: 16px;
    height: 16px;
    display: flex;
    align-items: center;
    justify-content: center;
    border: 1px solid #a4a4a4;
    outline: 1px solid #f4f4f4;
    background: #e4e4e4;
`;

const StatusBar = styled.footer`
    flex: none;
    height: 30px;
    display: flex;
    align-items: center;
    padding: 0 5px;
    background: #f3f2f4;
    label {
        margin: 0 10px;
    }
`;

const StatusIcon = styled.button`
    width: 20px;
    height: 20px;
    margin: 2px 15px 0 0;
    color: ${(p) => p.$color};
    svg {
        display: block;
    }
`;

const StatusLine = styled.span`
    width: 1px;
    height: 14px;
    margin-top: 2px;
    background: #8d8d8d;
`;

const Hint = styled.span`
    flex: 1;
    margin-left: 8px;
    font-size: 17px;
`;

const Measure = styled.input`
    align-self: flex-end;
    width: 250px;
    height: 28px;
    padding: 0 3px 2px;
    border: 1px solid #b4bfcf;
    border-bottom: 0;
    background: #fff;
`;
